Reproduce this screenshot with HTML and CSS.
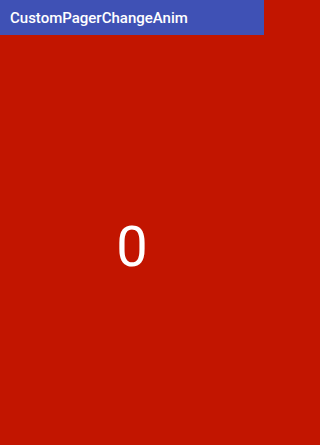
FILE: index.html
```html
<!DOCTYPE html>
<html>
<head>
<meta charset="utf-8">
<link rel="stylesheet" href="styles.css">
</head>
<body>
<div class="app">
  <header class="toolbar">CustomPagerChangeAnim</header>
  <main class="page">
    <span class="num">0</span>
  </main>
</div>
</body>
</html>
```
FILE: styles.css
```css
html, body {
  margin: 0;
  padding: 0;
  height: 100%;
}
body {
  font-family: Roboto, "Noto Sans", sans-serif;
  background: #c21500;
}
.app {
  display: flex;
  flex-direction: column;
  width: 264px;
  height: 445px;
  overflow: hidden;
}
.toolbar {
  height: 35px;
  flex: none;
  display: flex;
  align-items: center;
  padding-left: 10px;
  background: #3f51b5;
  color: #ffffff;
  font-size: 15px;
  font-weight: 500;
}
.page {
  flex: 1;
  display: flex;
  align-items: center;
  justify-content: center;
  padding-top: 14px;
  background: #c21500;
}
.num {
  color: #ffffff;
  font-size: 56px;
  line-height: 1;
}
```
